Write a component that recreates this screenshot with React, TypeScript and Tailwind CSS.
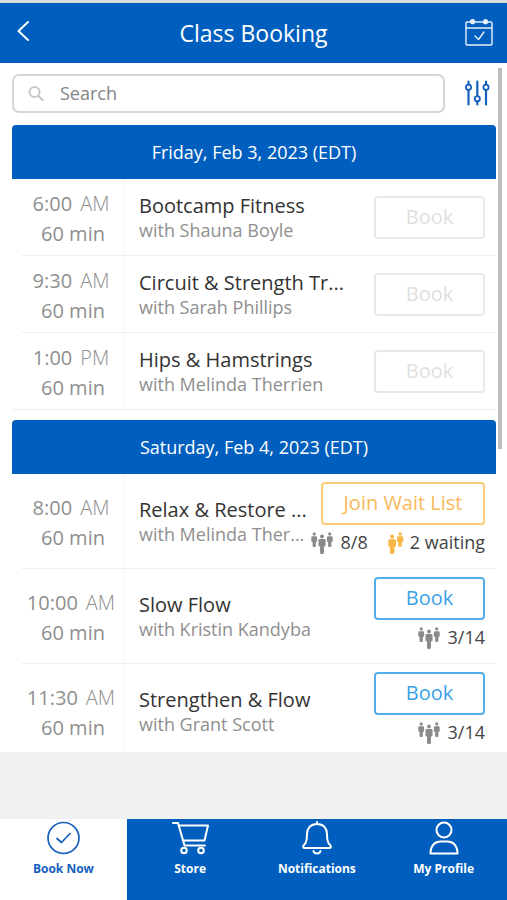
import type { ReactNode } from "react";

type Session = {
  time: string;
  period: string;
  title: string;
  instructor: string;
  action: "closed" | "open" | "waitlist";
  booked?: string;
  waiting?: string;
};

type Day = { label: string; sessions: Session[] };

const days: Day[] = [
  {
    label: "Friday, Feb 3, 2023 (EDT)",
    sessions: [
      { time: "6:00", period: "AM", title: "Bootcamp Fitness", instructor: "with Shauna Boyle", action: "closed" },
      { time: "9:30", period: "AM", title: "Circuit & Strength Tr...", instructor: "with Sarah Phillips", action: "closed" },
      { time: "1:00", period: "PM", title: "Hips & Hamstrings", instructor: "with Melinda Therrien", action: "closed" },
    ],
  },
  {
    label: "Saturday, Feb 4, 2023 (EDT)",
    sessions: [
      { time: "8:00", period: "AM", title: "Relax & Restore ...", instructor: "with Melinda Ther...", action: "waitlist", booked: "8/8", waiting: "2 waiting" },
      { time: "10:00", period: "AM", title: "Slow Flow", instructor: "with Kristin Kandyba", action: "open", booked: "3/14" },
      { time: "11:30", period: "AM", title: "Strengthen & Flow", instructor: "with Grant Scott", action: "open", booked: "3/14" },
    ],
  },
];

function GroupIcon() {
  return (
    <svg className="size-[22px] shrink-0 text-[#8a8a8a]" viewBox="0 0 68 68" fill="currentColor" aria-hidden="true">
      <circle cx="10" cy="6" r="5" />
      <path d="M5 13h10q4 0 4 4v10q0 4-4 4v12q0 3-3 3H8q-3 0-3-3V31q-4 0-4-4V17q0-4 4-4Z" />
      <circle cx="58" cy="6" r="5" />
      <path d="M53 13h10q4 0 4 4v10q0 4-4 4v12q0 3-3 3h-4q-3 0-3-3V31q-4 0-4-4V17q0-4 4-4Z" />
      <circle cx="34" cy="14" r="6" />
      <path d="M27 22h14q4 0 4 4v15q0 4-5 4v19q0 4-4 4h-4q-4 0-4-4V45q-5 0-5-4V26q0-4 4-4Z" />
    </svg>
  );
}

function WaitingIcon() {
  return (
    <svg className="h-[22px] w-4 shrink-0 text-[#f9b846]" viewBox="0 0 50 68" fill="currentColor" aria-hidden="true">
      <circle cx="38" cy="6" r="5.500" />
      <path d="M32 13h12q4 0 4 4v11q0 4-4 4h-1v11q0 3-3 3h-5q-3 0-3-3V32q-4 0-4-4V17q0-4 4-4Z" />
      <circle cx="13" cy="14" r="6.500" />
      <path d="M5 22h16q4 0 4 4v16q0 4-5 4v18q0 4-4 4h-6q-4 0-4-4V46q-5 0-5-4V26q0-4 4-4Z" />
    </svg>
  );
}

const buttonTone = {
  closed: "w-[111px] border-[#e8e8e8] text-[#e0e0e0]",
  open: "w-[111px] border-[#52aeea] text-[#3ba1e6]",
  waitlist: "w-[164px] border-[#facb78] text-[#f9b95a]",
};

function SessionRow({ session, last }: { session: Session; last: boolean }) {
  const tall = session.booked !== undefined;
  return (
    <li className={`flex items-stretch ${tall ? "h-[95px]" : "h-[77px]"}`}>
      <div className={`flex w-[113px] shrink-0 border-r border-[#f3f6f6] ${last ? "" : "pl-[10px]"}`}>
        <div className={`flex flex-1 flex-col items-center justify-center border-b border-[#eeeeee] pt-1 text-[20px] leading-[30px] text-[#8f8f8f] ${last ? "pl-[10px]" : ""}`}>
          <div className="flex gap-2 pr-1 whitespace-nowrap">
            <span>{session.time}</span>
            <span className="font-light">{session.period}</span>
          </div>
          <div>60 min</div>
        </div>
      </div>
      <div className="flex min-w-0 flex-1 items-center border-b border-[#eeeeee] pr-[11px] pl-[14px]">
        <div className="min-w-0 flex-1 whitespace-nowrap">
          <h3 className="text-[20px] leading-[25px] text-[#333333]">{session.title}</h3>
          <p className="text-[18px] leading-[24px] text-[#8f8f8f]">{session.instructor}</p>
        </div>
        <div className="flex shrink-0 flex-col items-end">
          <button
            type="button"
            disabled={session.action === "closed"}
            className={`h-[43px] rounded-[4px] border-2 bg-white text-[20px] leading-[30px] ${buttonTone[session.action]}`}
          >
            {session.action === "waitlist" ? "Join Wait List" : "Book"}
          </button>
          {tall && (
            <div className="flex h-9 items-center text-[18px] text-[#444444]">
              <GroupIcon />
              <span className="ml-2">{session.booked}</span>
              {session.waiting && (
                <>
                  <span className="ml-5 flex">
                    <WaitingIcon />
                  </span>
                  <span className="ml-[6px]">{session.waiting}</span>
                </>
              )}
            </div>
          )}
        </div>
      </div>
    </li>
  );
}

function Tab({ label, active, children }: { label: string; active?: boolean; children: ReactNode }) {
  return (
    <a
      href="#"
      aria-current={active ? "page" : undefined}
      className={`flex flex-1 flex-col items-center pt-[2px] ${active ? "bg-white text-[#1560bd]" : "bg-[#005fbe] text-white"}`}
    >
      <svg className="size-[34px] overflow-visible" viewBox="0 0 34 34" fill="none" stroke="currentColor" strokeWidth="2" strokeLinecap="round" strokeLinejoin="round" aria-hidden="true">
        {children}
      </svg>
      <span className="mt-1 text-[12px] leading-[20px] font-bold whitespace-nowrap">{label}</span>
    </a>
  );
}

export default function App() {
  return (
    <div className="flex h-screen flex-col bg-[#f1f1f1] font-['Open_Sans',sans-serif]">
      <header className="flex h-[63px] shrink-0 items-center justify-between border-t-[3px] border-[#dcdcdc] bg-[#005fbe] px-[14px] text-white">
        <button type="button" aria-label="Back" className="flex w-7 pb-1">
          <svg className="h-[22px] w-[18px]" viewBox="0 0 18 22" fill="none" stroke="currentColor" strokeWidth="2" strokeLinecap="round" strokeLinejoin="round" aria-hidden="true">
            <path d="M14 2 4.500 11 14 20" />
          </svg>
        </button>
        <h1 className="text-[23px] leading-8">Class Booking</h1>
        <button type="button" aria-label="My bookings">
          <svg className="size-7" viewBox="0 0 28 28" fill="none" stroke="currentColor" strokeWidth="1.400" strokeLinecap="round" strokeLinejoin="round" opacity="0.9" aria-hidden="true">
            <rect x="1" y="3" width="26" height="23" rx="1" />
            <path d="M1 9h26M10 17l3.500 3.500 5.500-7.500" />
            <circle cx="7.500" cy="2.700" r="1.900" fill="currentColor" />
            <circle cx="20.500" cy="2.700" r="1.900" fill="currentColor" />
          </svg>
        </button>
      </header>

      <div className="relative min-h-0 flex-1 bg-white">
        <main className="h-full overflow-hidden pr-[11px] pl-3">
          <div className="flex items-center pt-[11px] pb-3">
            <label className="flex h-[39px] min-w-0 flex-1 items-center rounded-[7px] border-2 border-[#d6d6d6] pl-[14px]">
              <svg className="size-4 shrink-0" viewBox="0 0 16 16" fill="none" stroke="#c8c8c8" strokeWidth="2" strokeLinecap="round" aria-hidden="true">
                <circle cx="6.500" cy="6" r="5" />
                <path d="m10.500 10 4 4" strokeWidth="2.400" />
              </svg>
              <input
                type="search"
                aria-label="Search"
                placeholder="Search"
                className="ml-4 min-w-0 flex-1 bg-transparent text-[18px] outline-none placeholder:text-[#858585]"
              />
            </label>
            <button type="button" aria-label="Filters" className="mr-[6px] ml-[19px] pb-[2px]">
              <svg className="size-[26px]" viewBox="0 0 26 26" fill="none" stroke="#1560bd" strokeWidth="1.800" strokeLinecap="round" aria-hidden="true">
                <path d="M4.500 1.500V4.500M4.500 10v14.500M13.300 1.500V16M13.300 21.500v3M22 1.500V4.500M22 10v14.500" strokeWidth="2.200" />
                <circle cx="4.500" cy="7.200" r="2.600" />
                <circle cx="13.300" cy="18.700" r="2.600" />
                <circle cx="22" cy="7.200" r="2.600" />
              </svg>
            </button>
          </div>
          {days.map((day) => (
            <section key={day.label} className="mb-[10px]">
              <h2 className="flex h-[54px] items-center justify-center rounded-t-[4px] bg-[#005fbe] text-[18px] text-white">
                {day.label}
              </h2>
              <ul>
                {day.sessions.map((session, i) => (
                  <SessionRow key={session.time} session={session} last={i === day.sessions.length - 1} />
                ))}
              </ul>
            </section>
          ))}
        </main>
        <div className="absolute top-[5px] right-[5px] h-[381px] w-1 bg-[#bdbdbd]" />
      </div>

      <nav className="mt-[67px] flex h-[81px] shrink-0">
        <Tab label="Book Now" active>
          <circle cx="17.500" cy="17" r="15.500" strokeWidth="1.700" />
          <path d="m11 17.500 4.500 4 8.500-9" strokeWidth="1.700" />
        </Tab>
        <Tab label="Store">
          <path d="M0 2h5l6.500 22.500H32M5.500 4.500H35l-3.500 15H9.800" />
          <circle cx="11" cy="29.500" r="2.800" />
          <circle cx="28" cy="29.500" r="2.800" />
        </Tab>
        <Tab label="Notifications">
          <path d="M17 1v2M17 3C10.500 3 7 7.500 7 13c0 8-1.500 9.500-3.500 11.500-.8 1-.3 2.500 1 2.500h25c1.300 0 1.800-1.500 1-2.500C28.500 22.500 27 21 27 13c0-5.500-3.500-10-10-10ZM13.500 30c.5 2 2 2.500 3.500 2.500s3-.5 3.500-2.500" />
        </Tab>
        <Tab label="My Profile">
          <circle cx="17" cy="9" r="7.500" />
          <path d="M3.500 32.500c0-8 4.500-12 10-12h7c5.500 0 10 4 10 12Z" />
        </Tab>
      </nav>
    </div>
  );
}
